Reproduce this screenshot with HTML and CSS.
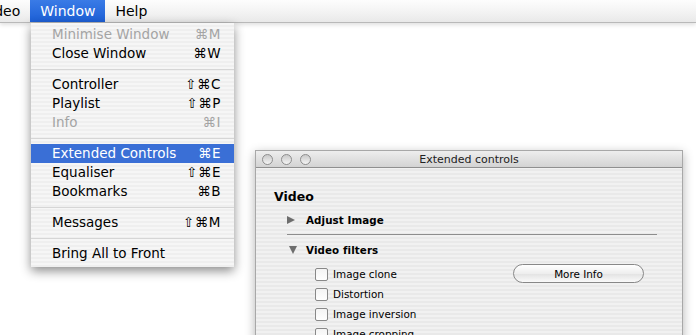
FILE: index.html
```html
<!doctype html>
<html lang="en">
<head>
    <meta charset="UTF-8">
    <title>Window menu - Extended controls</title>
    <link rel="stylesheet" href="styles.css">
</head>
<body>
    <div class="menubar">
        <div class="title first">Video</div>
        <div class="title open">Window</div>
        <div class="title">Help</div>
    </div>

    <div class="menu">
        <div class="item off"><span>Minimise Window</span><span class="key">&#8984;M</span></div>
        <div class="item"><span>Close Window</span><span class="key">&#8984;W</span></div>
        <div class="sep"></div>
        <div class="item"><span>Controller</span><span class="key">&#8679;&#8984;C</span></div>
        <div class="item"><span>Playlist</span><span class="key">&#8679;&#8984;P</span></div>
        <div class="item off"><span>Info</span><span class="key">&#8984;I</span></div>
        <div class="sep"></div>
        <div class="item active"><span>Extended Controls</span><span class="key">&#8984;E</span></div>
        <div class="item"><span>Equaliser</span><span class="key">&#8679;&#8984;E</span></div>
        <div class="item"><span>Bookmarks</span><span class="key">&#8984;B</span></div>
        <div class="sep"></div>
        <div class="item"><span>Messages</span><span class="key">&#8679;&#8984;M</span></div>
        <div class="sep"></div>
        <div class="item"><span>Bring All to Front</span></div>
    </div>

    <div class="window">
        <div class="titlebar">
            <div class="lights">
                <span class="light"></span>
                <span class="light"></span>
                <span class="light"></span>
            </div>
            <div class="wtitle">Extended controls</div>
        </div>
        <div class="content">
            <h3>Video</h3>
            <div class="disclosure"><span class="tri right"></span>Adjust Image</div>
            <div class="rule"></div>
            <div class="disclosure"><span class="tri down"></span>Video filters</div>
            <div class="filters">
                <div class="checks">
                    <label class="check"><span class="box"></span>Image clone</label>
                    <label class="check"><span class="box"></span>Distortion</label>
                    <label class="check"><span class="box"></span>Image inversion</label>
                    <label class="check"><span class="box"></span>Image cropping</label>
                </div>
                <button class="pill">More Info</button>
            </div>
        </div>
    </div>
</body>
</html>
```

FILE: styles.css
```css
body {
    margin: 0;
    width: 696px;
    height: 335px;
    overflow: hidden;
    background: #fff;
    font-family: "DejaVu Sans", "Noto Sans", sans-serif;
    position: relative;
}
.menubar {
    height: 22px;
    display: flex;
    background: linear-gradient(#fdfdfd, #f2f2f2 60%, #e9e9e9);
    border-bottom: 1px solid #b9b9b9;
    box-shadow: 0 2px 4px rgba(0, 0, 0, 0.12);
}
.title {
    font-size: 14px;
    line-height: 22px;
    padding: 0 10px;
    color: #000;
}
.title.first {
    margin-left: -29px;
}
.title.open {
    background: linear-gradient(#3a7be6, #1c5fd6);
    color: #fff;
}
.menu {
    position: absolute;
    left: 31px;
    top: 23px;
    width: 203px;
    padding: 2px 0 4px;
    background: repeating-linear-gradient(#f6f6f6 0 2px, #efefef 2px 4px);
    box-shadow: 0 4px 10px rgba(0, 0, 0, 0.45);
}
.item {
    display: flex;
    justify-content: space-between;
    height: 19px;
    line-height: 19px;
    padding: 0 13px 0 21px;
    font-size: 13.5px;
    color: #000;
}
.item.off {
    color: #a4a4a4;
}
.item.active {
    background: #3a6fd6;
    color: #fff;
}
.key {
    letter-spacing: 0.5px;
}
.sep {
    height: 1px;
    margin: 6px 0 5px;
    background: #d6d6d6;
}
.window {
    position: absolute;
    left: 255px;
    top: 150px;
    width: 426px;
    height: 200px;
    border: 1px solid #a8a8a8;
    box-shadow: 0 3px 10px rgba(0, 0, 0, 0.3);
    background: repeating-linear-gradient(#f1f1f1 0 2px, #e9e9e9 2px 4px);
}
.titlebar {
    height: 16px;
    display: flex;
    align-items: center;
    position: relative;
    background: linear-gradient(#eeeeee, #d3d3d3);
    border-bottom: 1px solid #8f8f8f;
}
.lights {
    display: flex;
    gap: 8px;
    padding-left: 6px;
}
.light {
    width: 9px;
    height: 9px;
    border-radius: 50%;
    border: 1px solid #8e8e8e;
    background: linear-gradient(#c9c9c9, #f4f4f4);
}
.wtitle {
    position: absolute;
    left: 0;
    right: 0;
    text-align: center;
    font-size: 11px;
    color: #222;
}
.content {
    padding: 20px 0 0 18px;
}
h3 {
    margin: 0 0 6px;
    font-size: 12.5px;
    font-weight: bold;
    line-height: 18px;
}
.disclosure {
    display: flex;
    align-items: center;
    font-size: 10.3px;
    font-weight: bold;
    letter-spacing: 0.1px;
    height: 16px;
    padding-left: 13px;
}
.tri {
    width: 0;
    height: 0;
    margin-right: 11px;
}
.tri.right {
    border-top: 4.5px solid transparent;
    border-bottom: 4.5px solid transparent;
    border-left: 8px solid #6d6d6d;
}
.tri.down {
    border-left: 4px solid transparent;
    border-right: 4px solid transparent;
    border-top: 8px solid #6d6d6d;
    margin-left: 2px;
    margin-right: 9px;
}
.rule {
    height: 1px;
    background: #8d8d8d;
    width: 370px;
    margin: 6px 0 7px 13px;
}
.filters {
    display: flex;
    align-items: flex-start;
    padding: 6px 0 0 41px;
}
.checks {
    display: flex;
    flex-direction: column;
    width: 198px;
}
.check {
    display: flex;
    align-items: center;
    height: 20px;
    font-size: 10.4px;
}
.box {
    width: 11px;
    height: 11px;
    border: 1px solid #888;
    border-radius: 2px;
    background: linear-gradient(#f4f4f4, #fff);
    margin-right: 5px;
}
.pill {
    width: 131px;
    height: 19px;
    border: 1px solid #888;
    border-radius: 10px;
    background: linear-gradient(#fff, #eee 50%, #e2e2e2 51%, #fafafa);
    font-family: inherit;
    font-size: 10.4px;
    padding: 0;
    margin-top: 0;
}
```
